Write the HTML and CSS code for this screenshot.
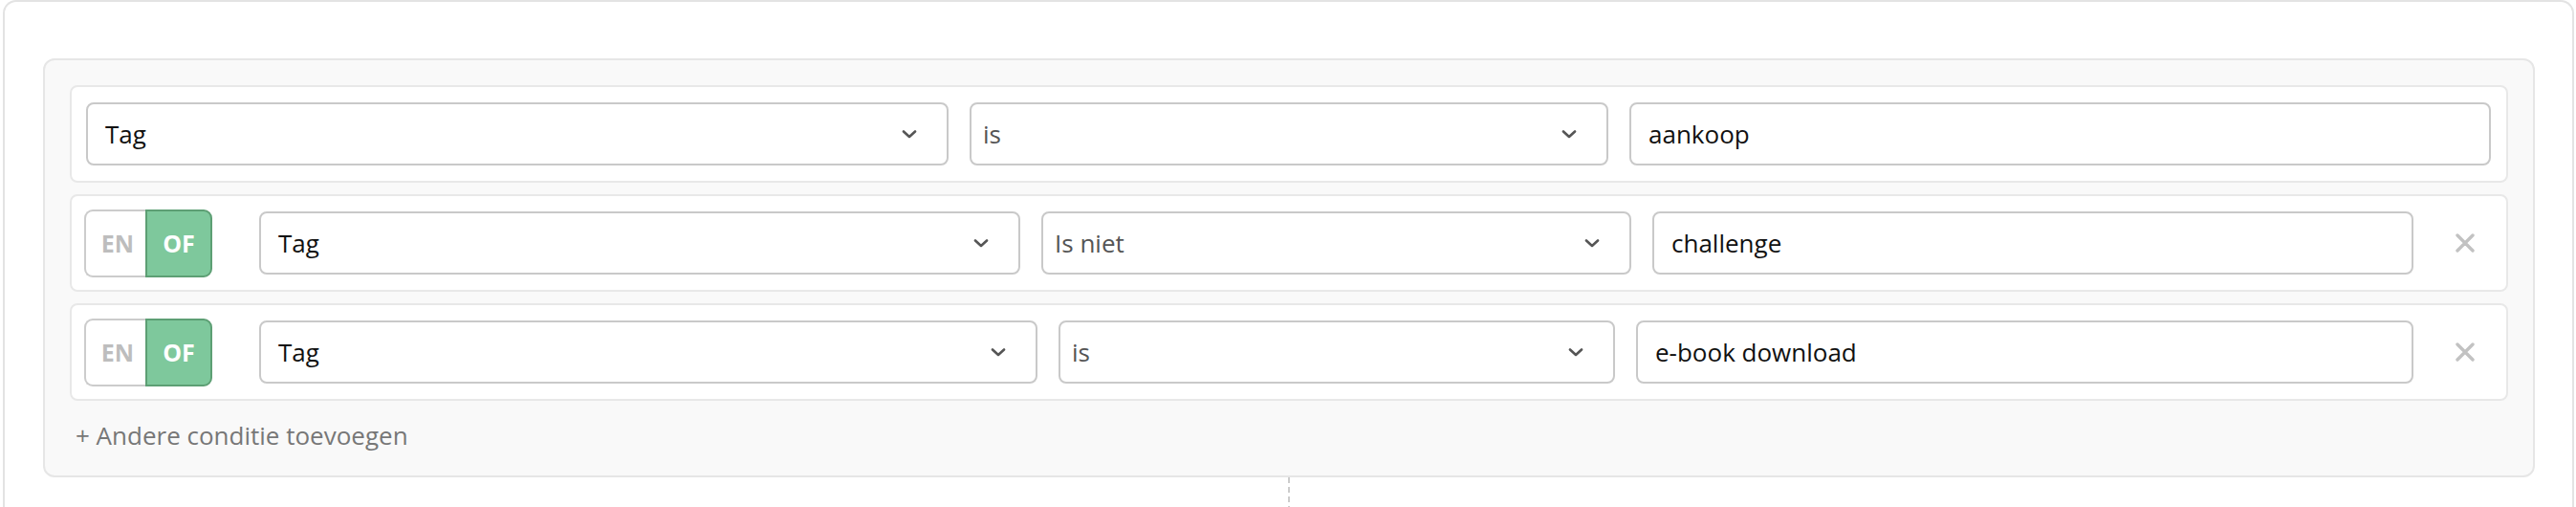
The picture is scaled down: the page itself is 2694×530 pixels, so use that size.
FILE: index.html
```html
<!DOCTYPE html>
<html lang="nl">
<head>
<meta charset="utf-8">
<title>Condities</title>
<link rel="stylesheet" href="styles.css">
</head>
<body>
<div class="outer">
  <div class="panel">
    <div class="row row-1">
      <div class="fields">
        <div class="select">
          <span class="value">Tag</span>
          <svg class="chev" viewBox="0 0 16 9" width="16" height="9"><path d="M2 1.5 L8 7 L14 1.5" fill="none" stroke="#555" stroke-width="2.6" stroke-linecap="round" stroke-linejoin="round"/></svg>
        </div>
        <div class="select op">
          <span class="value">is</span>
          <svg class="chev" viewBox="0 0 16 9" width="16" height="9"><path d="M2 1.5 L8 7 L14 1.5" fill="none" stroke="#555" stroke-width="2.6" stroke-linecap="round" stroke-linejoin="round"/></svg>
        </div>
        <div class="input"><span class="value">aankoop</span></div>
      </div>
    </div>

    <div class="row row-2">
      <div class="toggle">
        <span class="tg en">EN</span>
        <span class="tg of">OF</span>
      </div>
      <div class="fields">
        <div class="select">
          <span class="value">Tag</span>
          <svg class="chev" viewBox="0 0 16 9" width="16" height="9"><path d="M2 1.5 L8 7 L14 1.5" fill="none" stroke="#555" stroke-width="2.6" stroke-linecap="round" stroke-linejoin="round"/></svg>
        </div>
        <div class="select op">
          <span class="value">Is niet</span>
          <svg class="chev" viewBox="0 0 16 9" width="16" height="9"><path d="M2 1.5 L8 7 L14 1.5" fill="none" stroke="#555" stroke-width="2.6" stroke-linecap="round" stroke-linejoin="round"/></svg>
        </div>
        <div class="input"><span class="value">challenge</span></div>
      </div>
      <div class="remove">
        <svg viewBox="0 0 20 20" width="20" height="20"><path d="M2 2 L18 18 M18 2 L2 18" stroke="#c2c2c2" stroke-width="3.4" stroke-linecap="round"/></svg>
      </div>
    </div>

    <div class="row row-3">
      <div class="toggle">
        <span class="tg en">EN</span>
        <span class="tg of">OF</span>
      </div>
      <div class="fields">
        <div class="select">
          <span class="value">Tag</span>
          <svg class="chev" viewBox="0 0 16 9" width="16" height="9"><path d="M2 1.5 L8 7 L14 1.5" fill="none" stroke="#555" stroke-width="2.6" stroke-linecap="round" stroke-linejoin="round"/></svg>
        </div>
        <div class="select op">
          <span class="value">is</span>
          <svg class="chev" viewBox="0 0 16 9" width="16" height="9"><path d="M2 1.5 L8 7 L14 1.5" fill="none" stroke="#555" stroke-width="2.6" stroke-linecap="round" stroke-linejoin="round"/></svg>
        </div>
        <div class="input"><span class="value">e-book download</span></div>
      </div>
      <div class="remove">
        <svg viewBox="0 0 20 20" width="20" height="20"><path d="M2 2 L18 18 M18 2 L2 18" stroke="#c2c2c2" stroke-width="3.4" stroke-linecap="round"/></svg>
      </div>
    </div>

    <div class="add">+ Andere conditie toevoegen</div>
  </div>
  <div class="connector"></div>
</div>
</body>
</html>
```

FILE: styles.css
```css
* { box-sizing: border-box; }

html, body {
  margin: 0;
  padding: 0;
  background: #ffffff;
  overflow: hidden;
}

body {
  padding: 0 2px 0 3px;
  font-family: "Open Sans", "Noto Sans", "Liberation Sans", sans-serif;
  color: #111;
}

.outer {
  height: 530px;
  border: 2px solid #e3e3e3;
  border-bottom: 0;
  border-radius: 14px 14px 0 0;
  padding: 59px 39px 0 40px;
}

.panel {
  background: #f9f9f9;
  border: 2px solid #e6e6e6;
  border-radius: 12px;
  padding: 26px 26px 0 26px;
  display: flex;
  flex-direction: column;
  gap: 12px;
}

.row {
  background: #ffffff;
  border: 2px solid #e8e8e8;
  border-radius: 8px;
  display: flex;
  align-items: center;
  padding: 16px 16px 16px 15px;
}

.row-2, .row-3 {
  padding: 16px 0 16px 13px;
}

.fields {
  flex: 1;
  display: grid;
  column-gap: 22px;
}

.row-1 .fields { grid-template-columns: 902fr 668fr 901fr; }
.row-2 .fields { grid-template-columns: 796fr 617fr 796fr; }
.row-3 .fields { grid-template-columns: 814fr 582fr 813fr; }

.select, .input {
  height: 66px;
  border: 2px solid #c9c9c9;
  border-radius: 8px;
  background: #fff;
  display: flex;
  align-items: center;
  padding: 0 18px;
  font-size: 26px;
  color: #111;
  min-width: 0;
}

.select .value { flex: 1; }

.select .chev { margin-right: 13px; flex: none; }

.select.op {
  padding-left: 12px;
  color: #555;
}

.toggle {
  display: flex;
  width: 134px;
  height: 71px;
  margin: -3px 49px -3px 0;
  flex: none;
  font-size: 25px;
  font-weight: 700;
}

.tg {
  display: flex;
  align-items: center;
  justify-content: center;
}

.tg.en {
  width: 64px;
  border: 2px solid #cccccc;
  border-right: 0;
  border-radius: 9px 0 0 9px;
  color: #bdbdbd;
  padding-left: 4px;
}

.tg.of {
  width: 70px;
  background: #7ec89c;
  border: 2px solid #5d9f74;
  border-radius: 0 9px 9px 0;
  color: #ffffff;
}

.remove {
  flex: none;
  width: 97px;
  padding-left: 44px;
  display: flex;
  align-items: center;
}

.add {
  margin-top: 6px;
  margin-left: 6px;
  font-size: 26px;
  line-height: 36px;
  color: #777;
  padding-bottom: 24px;
}

.connector {
  width: 2px;
  height: 31px;
  margin: 0 auto;
  background: repeating-linear-gradient(to bottom, #cccccc 0 6px, transparent 6px 10px);
}
```
